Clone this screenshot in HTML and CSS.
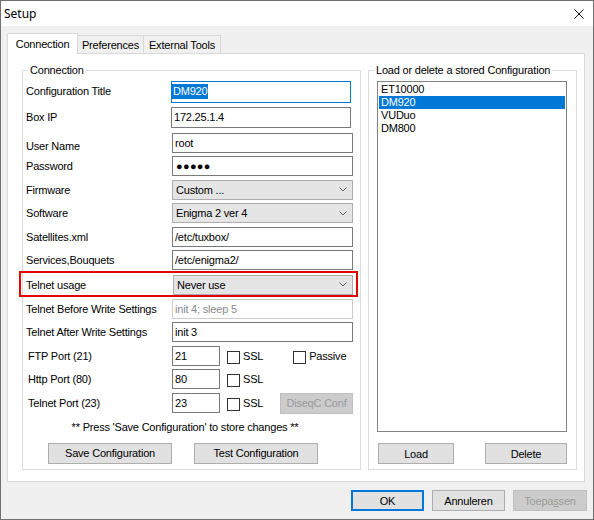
FILE: index.html
```html
<!DOCTYPE html>
<html>
<head>
<meta charset="utf-8">
<title>Setup</title>
<link rel="stylesheet" href="styles.css">
</head>
<body>
<div class="window">
  <div class="titlebar">
    <span class="title">Setup</span>
    <svg class="close" width="10" height="10" viewBox="0 0 10 10"><path d="M0.5 0.5L9.5 9.5M9.5 0.5L0.5 9.5" stroke="#111" stroke-width="1" fill="none"/></svg>
  </div>
  <div class="client">
    <div class="tabs">
      <div class="tab active w-conn">Connection</div>
      <div class="tab w-pref">Preferences</div>
      <div class="tab w-ext">External Tools</div>
    </div>
    <div class="panel">
      <fieldset class="group g-left">
        <legend>Connection</legend>
        <div class="gbody conn">
          <div class="row h26"><div class="lbl w145">Configuration Title</div><div class="tb focus narrow"><span class="sel">DM920</span></div></div>
          <div class="row h26"><div class="lbl w145">Box IP</div><div class="tb h21 narrow">172.25.1.4</div></div>
          <div class="row"><div class="lbl low">User Name</div><div class="tb">root</div></div>
          <div class="row"><div class="lbl">Password</div><div class="tb pw">●●●●●</div></div>
          <div class="row"><div class="lbl">Firmware</div><div class="cb"><span>Custom ...</span><svg class="chev" width="8" height="5" viewBox="0 0 8 5"><path d="M0.5 0.5L4 4L7.5 0.5" stroke="#606060" stroke-width="1" fill="none"/></svg></div></div>
          <div class="row"><div class="lbl">Software</div><div class="cb"><span>Enigma 2 ver 4</span><svg class="chev" width="8" height="5" viewBox="0 0 8 5"><path d="M0.5 0.5L4 4L7.5 0.5" stroke="#606060" stroke-width="1" fill="none"/></svg></div></div>
          <div class="row"><div class="lbl">Satellites.xml</div><div class="tb">/etc/tuxbox/</div></div>
          <div class="row h21"><div class="lbl">Services,Bouquets</div><div class="tb">/etc/enigma2/</div></div>
          <div class="row mark"><div class="lbl">Telnet usage</div><div class="cb"><span>Never use</span><svg class="chev" width="8" height="5" viewBox="0 0 8 5"><path d="M0.5 0.5L4 4L7.5 0.5" stroke="#606060" stroke-width="1" fill="none"/></svg></div></div>
          <div class="row"><div class="lbl">Telnet Before Write Settings</div><div class="tb ro">init 4; sleep 5</div></div>
          <div class="row"><div class="lbl">Telnet After Write Settings</div><div class="tb">init 3</div></div>
          <div class="row"><div class="lbl ind">FTP Port (21)</div><div class="tb port">21</div><span class="chk"></span><span class="cbl">SSL</span><span class="chk passive"></span><span class="cbl">Passive</span></div>
          <div class="row"><div class="lbl ind">Http Port (80)</div><div class="tb port">80</div><span class="chk"></span><span class="cbl">SSL</span></div>
          <div class="row"><div class="lbl ind">Telnet Port (23)</div><div class="tb port">23</div><span class="chk"></span><span class="cbl">SSL</span><div class="btn dis diseqc">DiseqC Conf</div></div>
          <div class="note">** Press 'Save Configuration' to store changes **</div>
          <div class="btnrow">
            <div class="btn cfg">Save Configuration</div>
            <div class="btn cfg">Test Configuration</div>
          </div>
        </div>
      </fieldset>
      <fieldset class="group g-right">
        <legend>Load or delete a stored Configuration</legend>
        <div class="gbody stored">
          <div class="listbox">
            <div class="item">ET10000</div>
            <div class="item selected">DM920</div>
            <div class="item">VUDuo</div>
            <div class="item">DM800</div>
          </div>
          <div class="lrow">
            <div class="btn load">Load</div>
            <div class="btn delete">Delete</div>
          </div>
        </div>
      </fieldset>
    </div>
    <div class="footer">
      <div class="btn ok">OK</div>
      <div class="btn fbtn">Annuleren</div>
      <div class="btn fbtn dis wide">Toepa<u>s</u>sen</div>
    </div>
  </div>
</div>
</body>
</html>
```

FILE: styles.css
```css
* { box-sizing: border-box; }
html, body { margin: 0; padding: 0; background: #fff; }
body {
  font-family: "Liberation Sans", Arial, sans-serif;
  font-size: 11px;
  letter-spacing: -0.2px;
  color: #000;
}
.window {
  width: 594px;
  height: 520px;
  border: 1px solid #707070;
  background: #f0f0f0;
  display: flex;
  flex-direction: column;
}
.titlebar {
  height: 25px;
  flex: none;
  background: #fff;
  display: flex;
  align-items: center;
  justify-content: space-between;
  padding: 0 9px 0 3px;
}
.title {
  font-family: "Noto Sans", "Open Sans", sans-serif;
  font-size: 12px;
  letter-spacing: 0;
}
.close { display: block; }
.client { padding: 7px 0 0 6px; }
.tabs {
  display: flex;
  align-items: flex-end;
  height: 20px;
  position: relative;
  z-index: 1;
}
.tab {
  height: 18px;
  border: 1px solid #d9d9d9;
  border-bottom: none;
  background: #f0f0f0;
  display: flex;
  align-items: center;
  justify-content: center;
  white-space: nowrap;
}
.tab + .tab { border-left: none; }
.tab.active { height: 21px; margin-bottom: -1px; background: #fff; }
.w-conn { width: 71px; }
.w-pref { width: 66px; }
.w-ext { width: 77px; }
.panel {
  width: 578px;
  height: 429px;
  border: 1px solid #d9d9d9;
  background: #fff;
  padding: 10px 7px 11px 14px;
  display: flex;
  gap: 7px;
}
.group {
  margin: 0;
  padding: 4px 0 5px 0;
  border: 1px solid #dcdcdc;
  min-width: 0;
  flex: none;
}
.group legend {
  margin-left: 5px;
  padding: 0 2px;
  line-height: 13px;
  white-space: nowrap;
}
.g-left { width: 339px; }
.g-right { width: 209px; }
.conn { padding: 0 7px 0 3px; }
.stored { padding: 0 9px 0 8px; }
.row {
  display: flex;
  align-items: flex-start;
  height: 23.4px;
}
.row.h26 { height: 26px; }
.row.h21 { height: 21px; }
.lbl {
  width: 146px;
  flex: none;
  line-height: 20px;
  white-space: nowrap;
}
.lbl.w145 { width: 145px; }
.lbl.low { padding-top: 3px; }
.lbl.ind { padding-left: 2px; }
.tb {
  flex: 1;
  height: 20px;
  border: 1px solid #7a7a7a;
  background: #fff;
  padding: 0 2px;
  line-height: 18px;
  white-space: nowrap;
  overflow: hidden;
}
.tb.h21 { height: 21px; line-height: 19px; }
.tb.narrow { margin-right: 2px; }
.tb.focus {
  height: 22px;
  border-color: #0078d7;
  padding: 2px 0 0 0;
  line-height: 15px;
}
.sel {
  display: inline-block;
  background: #0078d7;
  color: #fff;
  padding: 0 1px;
  line-height: 15px;
}
.tb.pw { letter-spacing: 0.3px; padding-left: 3px; }
.tb.ro { border-color: #cccccc; color: #8a8a8a; }
.tb.port { flex: none; width: 48px; }
.cb {
  flex: 1;
  height: 20px;
  border: 1px solid #adadad;
  background: #e5e5e5;
  padding: 0 5px 0 3px;
  display: flex;
  align-items: center;
  justify-content: space-between;
  white-space: nowrap;
}
.chev { display: block; }
.row.mark {
  height: 26px;
  border: 2px solid #e60000;
  margin: 0 -5px 2px -7px;
  padding: 2px 3px 0 5px;
}
.row.mark .lbl { width: 147px; }
.chk {
  width: 13px;
  height: 13px;
  flex: none;
  border: 1px solid #333;
  background: #fff;
  margin: 5px 0 0 7px;
}
.chk.passive { margin-left: 30px; }
.cbl { margin-left: 3px; line-height: 20px; white-space: nowrap; }
.btn {
  height: 21px;
  border: 1px solid #adadad;
  background: #e1e1e1;
  display: flex;
  align-items: center;
  justify-content: center;
  white-space: nowrap;
  flex: none;
}
.btn.dis { background: #cccccc; border-color: #bfbfbf; color: #9a9a9a; }
.diseqc { margin-left: auto; width: 73px; }
.note {
  margin-top: 5px;
  line-height: 13px;
  text-align: center;
  padding-right: 9px;
  white-space: nowrap;
}
.btnrow {
  display: flex;
  gap: 22px;
  margin-top: 9px;
  padding-left: 22px;
}
.cfg { width: 124px; }
.listbox {
  height: 351px;
  border: 1px solid #828282;
  background: #fff;
  padding: 1px;
}
.item { line-height: 13px; padding-left: 2px; white-space: nowrap; }
.item.selected { background: #0078d7; color: #fff; }
.lrow {
  display: flex;
  justify-content: space-between;
  margin-top: 11px;
}
.load { width: 76px; margin-left: 1px; }
.delete { width: 82px; }
.footer {
  display: flex;
  justify-content: flex-end;
  gap: 8px;
  margin-top: 8px;
  padding-right: 6px;
}
.fbtn { width: 73px; }
.fbtn.wide { width: 74px; }
.ok { width: 73px; border: 2px solid #0078d7; }
```
